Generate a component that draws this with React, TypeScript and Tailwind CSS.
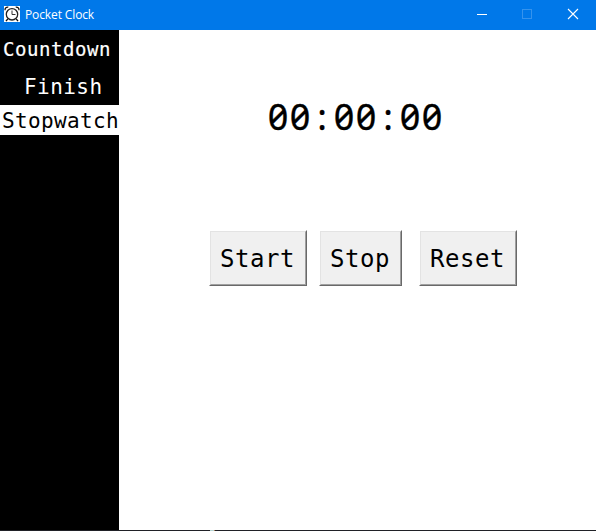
const mono = "font-['DejaVu_Sans_Mono',monospace]";

function ClockIcon() {
  return (
    <svg width="16" height="16" viewBox="0 0 16 16" fill="none" className="shrink-0 bg-white">
      <circle cx="8" cy="8.3" r="5.7" stroke="#222" strokeWidth="1.3" />
      <path d="M8 4.5V8.5H11.5" stroke="#333" strokeWidth="1" />
      <path d="M1 4.3C.8 2 2.5.8 4.3 1.2M15 4.3C15.2 2 13.5.8 11.7 1.2" stroke="#111" strokeWidth="1.3" />
      <path d="M3.8 12.8L2 15.2M12.2 12.8L14 15.2" stroke="#111" strokeWidth="1.4" />
    </svg>
  );
}

function TitleBar() {
  return (
    <header className="flex h-[30px] shrink-0 items-center bg-[#0078e9] pl-1 pr-[17px] pb-[2px] text-white">
      <ClockIcon />
      <span className="ml-[5px] grow pt-[2px] font-['Open_Sans',sans-serif] text-[12px] leading-7 tracking-[-0.12px]">Pocket Clock</span>
      <svg width="102" height="12" viewBox="0 0 102 12" fill="none" shapeRendering="crispEdges">
        <path d="M0 6.5H10" stroke="#fff" />
        <rect x="45.5" y="1.5" width="9" height="9" stroke="#3593ed" />
        <path d="M91 1L101 11M101 1L91 11" stroke="#fff" strokeWidth="1.1" shapeRendering="auto" />
      </svg>
    </header>
  );
}

function PushButton({ label, className }: { label: string; className: string }) {
  return (
    <button className={`h-14 border border-b-[#696969] border-l-white border-r-[#696969] border-t-white ${className}`}>
      <span className={`flex h-full items-center justify-center border border-b-[#a0a0a0] border-l-[#e3e3e3] border-r-[#a0a0a0] border-t-[#e3e3e3] bg-[#f0f0f0] pr-px pt-[2px] text-[24px] leading-none tracking-[0.55px] text-black ${mono}`}>
        {label}
      </span>
    </button>
  );
}

export default function App() {
  return (
    <div className="flex h-[531px] w-[596px] flex-col overflow-hidden bg-white">
      <TitleBar />
      <div className="flex min-h-0 grow">
        <nav className={`flex w-[119px] shrink-0 flex-col bg-black text-white ${mono}`}>
          <div className="h-[39px] pl-[3px] text-[19px] leading-[39px] tracking-[0.56px] [-webkit-text-stroke:0.2px]">Countdown</div>
          <div className="h-9 pl-6 text-[21px] leading-9 tracking-[0.45px]">Finish</div>
          <div className="h-[30px] whitespace-nowrap bg-white pl-[2px] pt-px text-[21px] leading-[30px] tracking-[0.36px] text-black">Stopwatch</div>
        </nav>
        <main className="flex grow flex-col">
          <div className="ml-[148px] mt-[62px] h-[50px] font-['Noto_Sans',sans-serif] text-[36px] leading-[50px] text-black [-webkit-text-stroke:0.3px] [font-feature-settings:'zero']">
            {"00:00:00".split("").map((c, i) => (
              <span key={i} className="inline-block w-[22px] text-center align-top">{c}</span>
            ))}
          </div>
          <div className="ml-[90px] mt-[88px] flex">
            <PushButton label="Start" className="w-[98px]" />
            <PushButton label="Stop" className="ml-3 w-[83px]" />
            <PushButton label="Reset" className="ml-[17px] w-[98px]" />
          </div>
        </main>
      </div>
      <div className="flex h-px shrink-0 bg-[#202127]">
        <div className="ml-[210px] w-1 bg-[#b5d3d2]" />
        <div className="w-px bg-[#a87b51]" />
      </div>
    </div>
  );
}
